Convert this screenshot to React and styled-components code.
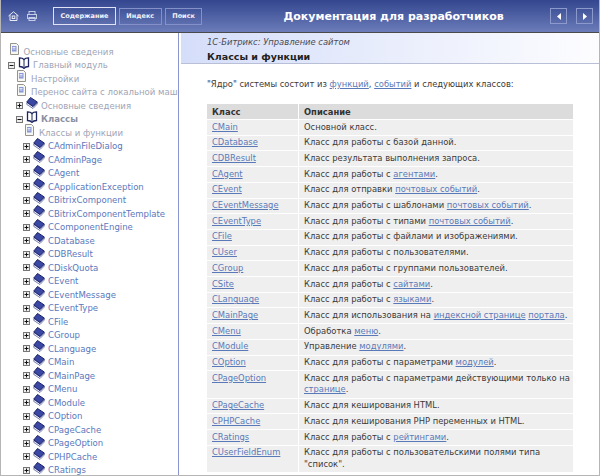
import React from "react";
import styled, { createGlobalStyle } from "styled-components";

const GlobalStyle = createGlobalStyle`
  html, body {
    margin: 0;
    padding: 0;
    background: #fff;
  }
  body {
    font-family: "DejaVu Sans", Verdana, sans-serif;
    font-size: 8.4px;
    color: #3a3a3a;
  }
`;

const Page = styled.div`
  width: 600px;
  height: 476px;
  box-sizing: border-box;
  border: 1px solid #b5b5b5;
  border-top: 0;
  display: flex;
  flex-direction: column;
  overflow: hidden;
`;

const Header = styled.div`
  height: 33px;
  box-sizing: border-box;
  flex: none;
  display: flex;
  align-items: center;
  background: linear-gradient(#33468f, #6c7cb9);
  border-bottom: 1px solid #4a4a4a;
  padding: 0 6px 0 7px;
`;

const HeadIcons = styled.div`
  display: flex;
  align-items: center;
  gap: 8px;
  width: 45px;
  flex: none;
`;

const Tabs = styled.div`
  display: flex;
  align-items: center;
  gap: 3px;
`;

const Tab = styled.div`
  box-sizing: border-box;
  height: ${(p) => (p.$active ? "18px" : "17px")};
  padding: 0 6.5px;
  display: flex;
  align-items: center;
  border: 1px solid ${(p) => (p.$active ? "#dfe3f5" : "#8491c8")};
  color: #f2f4fb;
  font-size: 6.5px;
  font-weight: bold;
`;

const HeadTitle = styled.div`
  margin-left: 81px;
  color: #fff;
  font-size: 11px;
  font-weight: bold;
  white-space: nowrap;
`;

const NavGroup = styled.div`
  margin-left: auto;
  display: flex;
  gap: 9px;
`;

const NavButton = styled.div`
  box-sizing: border-box;
  width: 17px;
  height: 16px;
  border: 1px solid #8c99cc;
  display: flex;
  align-items: center;
  justify-content: center;
`;

const Body = styled.div`
  flex: 1;
  display: flex;
  min-height: 0;
`;

const Sidebar = styled.div`
  width: 178px;
  box-sizing: border-box;
  flex: none;
  border-right: 1px solid #8b95d0;
  padding-top: 12px;
  overflow: hidden;
  white-space: nowrap;
`;

const TreeRow = styled.div`
  height: 13.5px;
  display: flex;
  align-items: center;
  gap: 3px;
  padding-left: ${(p) => p.$indent}px;
`;

const Toggle = styled.svg`
  width: 7px;
  height: 7px;
  flex: none;
`;

const TreeIcon = styled.svg`
  width: 12px;
  height: 12px;
  flex: none;
  margin-bottom: 5px;
`;

const TreeLabel = styled.span`
  font-size: 8.55px;
  font-weight: ${(p) => (p.$bold ? "bold" : "normal")};
  color: ${(p) => (p.$link ? "#5a78bd" : p.$bold ? "#8b90a2" : "#a0a5b6")};
`;

const Main = styled.div`
  flex: 1;
  min-width: 0;
`;

const Crumbs = styled.div`
  height: 31px;
  box-sizing: border-box;
  margin-left: 2px;
  padding: 3.5px 0 0 26px;
  background: linear-gradient(90deg, #d5def9, #fdfdff);
  border-bottom: 1px solid #b9bfd6;
`;

const CrumbPath = styled.div`
  font-style: italic;
  font-size: 8.4px;
  color: #4a4a55;
  line-height: 11px;
`;

const PageTitle = styled.div`
  margin-top: 1px;
  font-weight: bold;
  font-size: 9.5px;
  color: #222;
  line-height: 15px;
`;

const Content = styled.div`
  padding: 15px 0 0 28px;
`;

const Intro = styled.div`
  line-height: 11px;
  margin-bottom: 13px;
`;

const DocLink = styled.a`
  color: #5a79b8;
  text-decoration: underline;
`;

const Table = styled.table`
  width: 368px;
  border-collapse: separate;
  border-spacing: 1px;
  margin-left: -1px;
  table-layout: fixed;
  font-size: 8.4px;
`;

const Th = styled.th`
  background: #dcdcdc;
  text-align: left;
  font-weight: bold;
  padding: 1.5px 5px;
  line-height: 12px;
  color: #333;
`;

const Td = styled.td`
  background: #efefef;
  padding: 1.5px 2px 1.5px 5px;
  line-height: 11.7px;
  vertical-align: top;
`;

const Toggler = ({ open }) => (
  <Toggle viewBox="0 0 7 7">
    <rect x="0.5" y="0.5" width="6" height="6" fill="#eee" stroke="#777" />
    <path d={open ? "M1.5 3.5h4" : "M1.5 3.5h4M3.5 1.5v4"} stroke="#111" />
  </Toggle>
);

const PageIcon = () => (
  <TreeIcon viewBox="0 0 12 12">
    <path d="M1.5.5h6l2 2v9h-8z" fill="#f6f6f2" stroke="#94948c" />
    <path d="M3 3h4.500v5.500H3z" fill="#8897d6" />
    <path d="M3.500 4.500h3M3.500 6h3" stroke="#e3e7fa" />
  </TreeIcon>
);

const OpenBookIcon = () => (
  <TreeIcon viewBox="0 0 12 12">
    <path d="M6 2.500C5 1.200 3 .8 1.500.8v8.700c1.500 0 3.500.5 4.500 2 1-1.500 3-2 4.500-2V.8C9 .8 7 1.200 6 2.500z" fill="#fff" stroke="#1d2560" strokeWidth="1.300" />
    <path d="M6 2.500v8.500" stroke="#1d2560" />
  </TreeIcon>
);

const BookIcon = () => (
  <TreeIcon viewBox="0 0 12 12">
    <path d="M.8 5.500v2L7 11.500l4.300-4.500V5.500L7 9.500z" fill="#eef0fa" stroke="#2a3280" strokeWidth=".6" />
    <path d="M.8 5 4.500.5 11.300 5 7 9.500z" fill="#3a47a3" stroke="#1c2468" strokeLinejoin="round" />
  </TreeIcon>
);

const HomeIcon = () => (
  <svg width="11" height="10" viewBox="0 0 11 10" fill="none" stroke="#e6e9f8">
    <path d="M.5 5 5.500.8l5 4.200M2 4v5.500h7V4" />
    <rect x="4.200" y="5" width="2.600" height="2.500" />
  </svg>
);

const PrintIcon = () => (
  <svg width="10" height="10" viewBox="0 0 10 10" fill="none" stroke="#c4cbe8">
    <rect x="2" y=".5" width="6" height="3" />
    <rect x=".5" y="3.500" width="9" height="4" />
    <rect x="2" y="6.500" width="6" height="3" />
  </svg>
);

const Arrow = ({ left }) => (
  <svg width="4" height="7" viewBox="0 0 4 7">
    <path d={left ? "M4 0v7L0 3.500z" : "M0 0v7l4-3.500z"} fill="#fff" />
  </svg>
);

const classNames = [
  "CAdminFileDialog", "CAdminPage", "CAgent", "CApplicationException", "CBitrixComponent",
  "CBitrixComponentTemplate", "CComponentEngine", "CDatabase", "CDBResult", "CDiskQuota",
  "CEvent", "CEventMessage", "CEventType", "CFile", "CGroup", "CLanguage", "CMain",
  "CMainPage", "CMenu", "CModule", "COption", "CPageCache", "CPageOption", "CPHPCache", "CRatings",
];

const rows = [
  ["CMain", "Основной класс."],
  ["CDatabase", "Класс для работы с базой данной."],
  ["CDBResult", "Класс результата выполнения запроса."],
  ["CAgent", <>Класс для работы с <DocLink>агентами</DocLink>.</>],
  ["CEvent", <>Класс для отправки <DocLink>почтовых событий</DocLink>.</>],
  ["CEventMessage", <>Класс для работы с шаблонами <DocLink>почтовых событий</DocLink>.</>],
  ["CEventType", <>Класс для работы с типами <DocLink>почтовых событий</DocLink>.</>],
  ["CFile", "Класс для работы с файлами и изображениями."],
  ["CUser", "Класс для работы с пользователями."],
  ["CGroup", "Класс для работы с группами пользователей."],
  ["CSite", <>Класс для работы с <DocLink>сайтами</DocLink>.</>],
  ["CLanguage", <>Класс для работы с <DocLink>языками</DocLink>.</>],
  ["CMainPage", <>Класс для использования на <DocLink>индексной странице</DocLink> <DocLink>портала</DocLink>.</>],
  ["CMenu", <>Обработка <DocLink>меню</DocLink>.</>],
  ["CModule", <>Управление <DocLink>модулями</DocLink>.</>],
  ["COption", <>Класс для работы с параметрами <DocLink>модулей</DocLink>.</>],
  ["CPageOption", <>Класс для работы с параметрами действующими только на <DocLink>странице</DocLink>.</>],
  ["CPageCache", "Класс для кеширования HTML."],
  ["CPHPCache", "Класс для кеширования PHP переменных и HTML."],
  ["CRatings", <>Класс для работы с <DocLink>рейтингами</DocLink>.</>],
  ["CUserFieldEnum", 'Класс для работы с пользовательскими полями типа "список".'],
];

export default function App() {
  return (
    <Page>
      <GlobalStyle />
      <Header>
        <HeadIcons>
          <HomeIcon />
          <PrintIcon />
        </HeadIcons>
        <Tabs>
          <Tab $active>Содержание</Tab>
          <Tab>Индекс</Tab>
          <Tab>Поиск</Tab>
        </Tabs>
        <HeadTitle>Документация для разработчиков</HeadTitle>
        <NavGroup>
          <NavButton><Arrow left /></NavButton>
          <NavButton><Arrow /></NavButton>
        </NavGroup>
      </Header>
      <Body>
        <Sidebar>
          <TreeRow $indent={7.5}><PageIcon /><TreeLabel>Основные сведения</TreeLabel></TreeRow>
          <TreeRow $indent={7}><Toggler open /><OpenBookIcon /><TreeLabel>Главный модуль</TreeLabel></TreeRow>
          <TreeRow $indent={15}><PageIcon /><TreeLabel>Настройки</TreeLabel></TreeRow>
          <TreeRow $indent={15}><PageIcon /><TreeLabel>Перенос сайта с локальной машины</TreeLabel></TreeRow>
          <TreeRow $indent={15}><Toggler /><BookIcon /><TreeLabel>Основные сведения</TreeLabel></TreeRow>
          <TreeRow $indent={15}><Toggler open /><OpenBookIcon /><TreeLabel $bold>Классы</TreeLabel></TreeRow>
          <TreeRow $indent={23}><PageIcon /><TreeLabel>Классы и функции</TreeLabel></TreeRow>
          {classNames.map((name) => (
            <TreeRow key={name} $indent={22}>
              <Toggler />
              <BookIcon />
              <TreeLabel $link>{name}</TreeLabel>
            </TreeRow>
          ))}
        </Sidebar>
        <Main>
          <Crumbs>
            <CrumbPath>1С-Битрикс: Управление сайтом</CrumbPath>
            <PageTitle>Классы и функции</PageTitle>
          </Crumbs>
          <Content>
            <Intro>
              "Ядро" системы состоит из <DocLink>функций</DocLink>, <DocLink>событий</DocLink> и следующих классов:
            </Intro>
            <Table>
              <colgroup>
                <col width="91" />
                <col />
              </colgroup>
              <thead>
                <tr>
                  <Th>Класс</Th>
                  <Th>Описание</Th>
                </tr>
              </thead>
              <tbody>
                {rows.map(([name, text]) => (
                  <tr key={name}>
                    <Td><DocLink>{name}</DocLink></Td>
                    <Td>{text}</Td>
                  </tr>
                ))}
              </tbody>
            </Table>
          </Content>
        </Main>
      </Body>
    </Page>
  );
}
